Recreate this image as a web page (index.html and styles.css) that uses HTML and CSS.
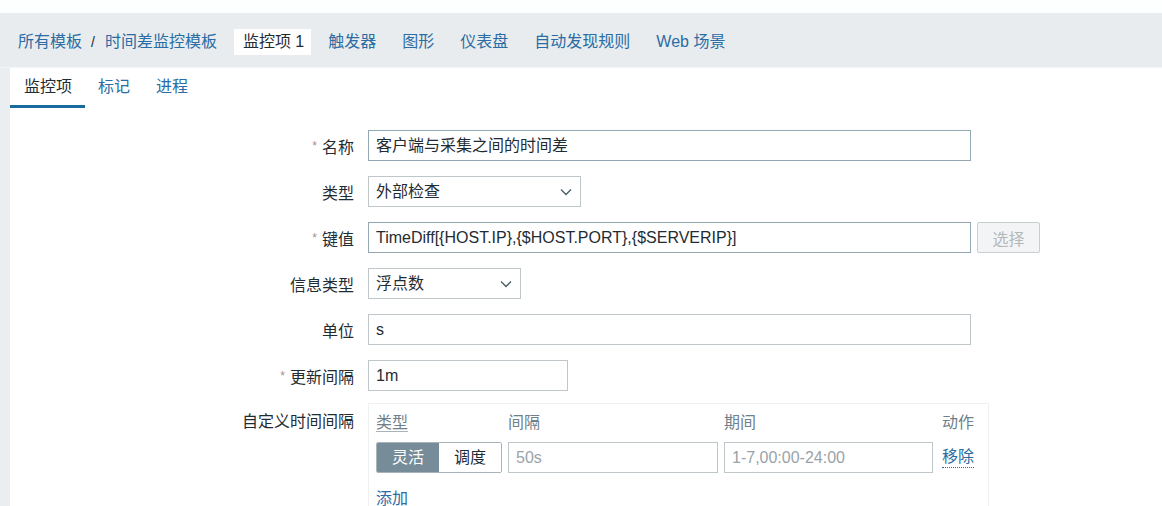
FILE: index.html
```html
<!DOCTYPE html>
<html lang="zh-CN">
<head>
    <meta charset="UTF-8">
    <title>监控项</title>
    <link rel="stylesheet" href="styles.css">
</head>
<body>

    <div class="top-strip"></div>

    <nav class="header-nav">
        <ul class="nav-list">
            <li class="nav-item crumbs">
                <a href="#">所有模板</a><span class="crumb-sep">/</span><a href="#">时间差监控模板</a>
            </li>
            <li class="nav-item active">监控项 1</li>
            <li class="nav-item"><a href="#">触发器</a></li>
            <li class="nav-item"><a href="#">图形</a></li>
            <li class="nav-item"><a href="#">仪表盘</a></li>
            <li class="nav-item"><a href="#">自动发现规则</a></li>
            <li class="nav-item"><a href="#">Web 场景</a></li>
        </ul>
    </nav>

    <div class="page">
        <div class="content">
            <div class="tabs">
                <div class="tab active">监控项</div>
                <div class="tab">标记</div>
                <div class="tab">进程</div>
            </div>

            <div class="form-list">
                <div class="form-row">
                    <label class="form-label required">名称</label>
                    <div class="form-field">
                        <div class="input input-wide input-focus">客户端与采集之间的时间差</div>
                    </div>
                </div>

                <div class="form-row">
                    <label class="form-label">类型</label>
                    <div class="form-field">
                        <div class="input select select-type">
                            <span>外部检查</span>
                            <svg class="chevron" width="12" height="8" viewBox="0 0 12 8"><path d="M1 1.5 L6 6.5 L11 1.5" fill="none" stroke="#4a5a63" stroke-width="1.3"/></svg>
                        </div>
                    </div>
                </div>

                <div class="form-row">
                    <label class="form-label required">键值</label>
                    <div class="form-field">
                        <div class="input input-wide input-focus">TimeDiff[{HOST.IP},{$HOST.PORT},{$SERVERIP}]</div>
                        <button class="btn-select" disabled>选择</button>
                    </div>
                </div>

                <div class="form-row">
                    <label class="form-label">信息类型</label>
                    <div class="form-field">
                        <div class="input select select-info">
                            <span>浮点数</span>
                            <svg class="chevron" width="12" height="8" viewBox="0 0 12 8"><path d="M1 1.5 L6 6.5 L11 1.5" fill="none" stroke="#4a5a63" stroke-width="1.3"/></svg>
                        </div>
                    </div>
                </div>

                <div class="form-row">
                    <label class="form-label">单位</label>
                    <div class="form-field">
                        <div class="input input-wide">s</div>
                    </div>
                </div>

                <div class="form-row">
                    <label class="form-label required">更新间隔</label>
                    <div class="form-field">
                        <div class="input input-short">1m</div>
                    </div>
                </div>

                <div class="form-row row-top">
                    <label class="form-label label-top">自定义时间间隔</label>
                    <div class="form-field">
                        <div class="interval-box">
                            <div class="interval-grid">
                                <div class="col-head head-type">类型</div>
                                <div class="col-head">间隔</div>
                                <div class="col-head">期间</div>
                                <div class="col-head head-action">动作</div>

                                <div class="segment">
                                    <span class="seg on">灵活</span>
                                    <span class="seg">调度</span>
                                </div>
                                <div class="input input-dim">50s</div>
                                <div class="input input-dim">1-7,00:00-24:00</div>
                                <a href="#" class="link-remove">移除</a>
                            </div>
                            <a href="#" class="link-add">添加</a>
                        </div>
                    </div>
                </div>
            </div>
        </div>
    </div>

</body>
</html>
```

FILE: styles.css
```css
body {
    margin: 0;
    padding: 0;
    font-family: 'Liberation Sans', Arial, 'Noto Sans CJK SC', sans-serif;
    font-size: 15px;
    color: #1f2c33;
    background-color: #ebeef0;
    overflow: hidden;
}

a {
    color: #2a6ca3;
    text-decoration: none;
}

.top-strip {
    height: 13px;
    background-color: #fdfefe;
}

/* header navigation */
.header-nav {
    height: 55px;
    background-color: #e9ecee;
    border-bottom: 1px solid #f3f5f6;
    box-sizing: border-box;
    padding: 3px 0 0 9px;
    display: flex;
    align-items: center;
}

.nav-list {
    list-style: none;
    margin: 0;
    padding: 0;
    display: flex;
    align-items: center;
    gap: 8px;
}

.nav-item {
    height: 26px;
    line-height: 26px;
    padding: 0 9px;
    font-size: 16px;
}

.nav-item.active {
    padding-right: 7px;
    background-color: #fff;
    color: #1f2c33;
}

.crumb-sep {
    color: #1f2c33;
    margin: 0 10px 0 9px;
    font-size: 14px;
}

/* page body */
.page {
    padding-left: 10px;
}

.content {
    background-color: #fff;
    min-height: 440px;
}

.tabs {
    display: flex;
    height: 40px;
}

.tab {
    padding: 0 13px;
    line-height: 38px;
    font-size: 16px;
    color: #2a6ca3;
    border-bottom: 3px solid transparent;
}

.tab.active {
    padding-left: 14px;
    color: #1f2c33;
    border-bottom-color: #176b9e;
}

/* form */
.form-list {
    padding-top: 22px;
}

.form-row {
    display: flex;
    align-items: center;
    margin-bottom: 15px;
}

.form-row.row-top {
    align-items: flex-start;
    margin-top: -3px;
}

.form-label {
    width: 344px;
    text-align: right;
    margin-right: 14px;
    font-size: 16px;
}

.form-label.required::before {
    content: '*';
    color: #a88f90;
    font-size: 12px;
    margin-right: 5px;
    position: relative;
    top: -3px;
}

.label-top {
    padding-top: 5px;
}

.form-field {
    display: flex;
    align-items: center;
    gap: 6px;
}

.input {
    height: 31px;
    box-sizing: border-box;
    border: 1px solid #bfc6ca;
    background-color: #fff;
    padding: 0 7px;
    line-height: 29px;
    font-size: 16px;
    white-space: nowrap;
    overflow: hidden;
}

.input-focus {
    border-color: #94a8b3;
}

.input-wide {
    width: 603px;
}

.input-short {
    width: 200px;
}

.input-dim {
    color: #9aa3a8;
}

.select {
    display: flex;
    align-items: center;
    justify-content: space-between;
    padding-right: 8px;
}

.select-type {
    width: 213px;
}

.select-info {
    width: 153px;
}

.btn-select {
    width: 63px;
    height: 31px;
    border: 1px solid #c9ced1;
    border-radius: 2px;
    background-color: #f3f4f5;
    color: #b3b8bb;
    font-family: inherit;
    font-size: 16px;
    padding: 0;
}

/* custom intervals */
.interval-box {
    width: 621px;
    box-sizing: border-box;
    border: 1px solid #eef0f2;
    padding: 9px 14px 0 7px;
    height: 110px;
}

.interval-grid {
    display: grid;
    grid-template-columns: 126px 210px 209px auto;
    column-gap: 6px;
    row-gap: 9px;
    align-items: center;
}

.col-head {
    font-size: 16px;
    color: #6f808a;
    line-height: 20px;
}

.head-type {
    text-decoration: underline;
    text-decoration-color: #a9b4ba;
    text-underline-offset: 3px;
}

.head-action {
    text-align: right;
}

.segment {
    display: flex;
    height: 31px;
    box-sizing: border-box;
    border: 1px solid #a9b4ba;
    border-radius: 2px;
    overflow: hidden;
}

.seg {
    flex: 1;
    text-align: center;
    line-height: 29px;
    font-size: 16px;
    color: #1f2c33;
    background-color: #fff;
}

.seg.on {
    background-color: #768d99;
    color: #fff;
}

.link-remove {
    font-size: 16px;
    justify-self: end;
    border-bottom: 1px dotted #2a6ca3;
    line-height: 20px;
}

.link-add {
    display: inline-block;
    margin-top: 12px;
    font-size: 16px;
}
```
